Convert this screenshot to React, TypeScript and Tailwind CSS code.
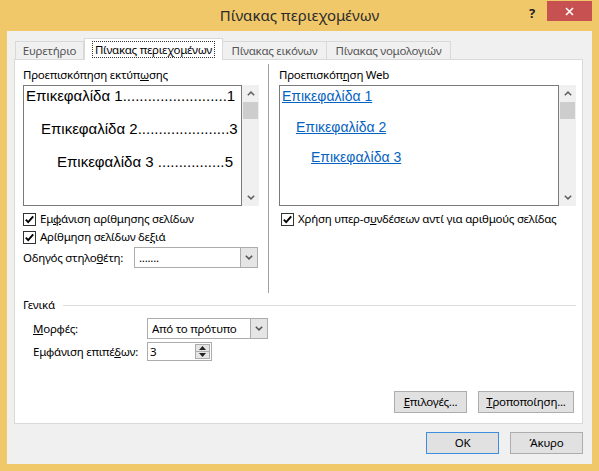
import React from 'react';

const ui = "font-['Noto_Sans',sans-serif]";
const arial = "font-['Liberation_Sans',Arial,sans-serif]";
const txt = 'text-[11.5px] tracking-[-0.25px]';

function Check() {
  return (
    <svg width="13" height="13" viewBox="0 0 13 13" className="shrink-0">
      <rect x="0.5" y="0.5" width="12" height="12" fill="#fff" stroke="#333" />
      <path d="M2.8 6.6 L5.2 9.1 L10.2 3.4" fill="none" stroke="#000" strokeWidth="1.9" />
    </svg>
  );
}

function Chevron({ up = false, color = '#606060' }: { up?: boolean; color?: string }) {
  return (
    <svg width="8" height="5" viewBox="0 0 8 5">
      <path
        d={up ? 'M0.8 4.3 L4 1.1 L7.2 4.3' : 'M0.8 0.7 L4 3.9 L7.2 0.7'}
        fill="none"
        stroke={color}
        strokeWidth="1.5"
      />
    </svg>
  );
}

function Scrollbar() {
  return (
    <div className="w-[17px] h-[121px] bg-[#f0f0f0] flex flex-col">
      <div className="h-[17px] flex items-center justify-center">
        <Chevron up />
      </div>
      <div className="h-[17px] mx-[1px] bg-[#cdcdcd]" />
      <div className="flex-1" />
      <div className="h-[17px] flex items-center justify-center">
        <Chevron />
      </div>
    </div>
  );
}

function Select({ value, width }: { value: string; width: string }) {
  return (
    <div className={`${width} h-full flex border border-[#acacac] bg-white`}>
      <div className={`flex-1 flex items-center pl-[4px] ${txt} text-black`}>{value}</div>
      <div className="w-[17px] bg-[#e5e5e5] border-l border-[#acacac] flex items-center justify-center">
        <Chevron color="#555" />
      </div>
    </div>
  );
}

function Leader({ title, page, dots, indent }: { title: string; page: string; dots: number; indent: string }) {
  return (
    <div className={`flex items-baseline whitespace-pre ${indent}`}>
      <span>{title}</span>
      <span>{'.'.repeat(dots)}</span>
      <span className="ml-auto">{page}</span>
    </div>
  );
}

function CheckRow({ children }: { children: React.ReactNode }) {
  return (
    <div className={`h-[18px] flex items-center gap-[4px] ${txt} text-black whitespace-nowrap`}>
      <Check />
      <span>{children}</span>
    </div>
  );
}

function Btn({ children, width, focus = false }: { children: React.ReactNode; width: string; focus?: boolean }) {
  return (
    <div
      className={`${width} h-[22px] flex items-center justify-center ${txt} text-black bg-[#e1e1e1] border ${
        focus ? 'border-[#3c8fde]' : 'border-[#adadad]'
      }`}
    >
      {children}
    </div>
  );
}

export default function App() {
  return (
    <div className={`w-[599px] h-[471px] bg-[#f0c86a] flex flex-col ${ui}`}>
      {/* title bar */}
      <div className="h-[31px] relative flex items-center justify-center">
        <span className="text-[15px] text-[#2b2b2b] pb-[1px]">Πίνακας περιεχομένων</span>
        <span className="absolute left-[529px] top-[4px] text-[13px] font-bold text-[#222]">?</span>
        <div className="absolute left-[547px] top-[1px] w-[45px] h-[20px] bg-[#c75050] flex items-center justify-center">
          <svg width="9" height="9" viewBox="0 0 9 9">
            <path d="M1 1 L8 8 M8 1 L1 8" stroke="#fff" strokeWidth="1.6" />
          </svg>
        </div>
      </div>

      {/* client */}
      <div className="mx-[7px] h-[433px] bg-[#f0f0f0] pl-[7px] pr-[9px] pt-[7px]">
        {/* tabs */}
        <div className={`h-[21px] flex items-end pl-[1px] relative z-10 ${txt}`}>
          <div className="w-[69px] h-[18px] border border-b-0 border-[#d9d9d9] flex items-center justify-center text-[#555]">
            Ευρετήριο
          </div>
          <div className="w-[139px] h-[22px] -mb-[1px] bg-white border border-b-0 border-[#d9d9d9] flex items-center justify-center">
            <span className="text-black border border-dotted border-[#333] px-[2px] leading-[15px]">
              Πίνακας περιε<u>χ</u>ομένων
            </span>
          </div>
          <div className="w-[104px] h-[18px] border border-b-0 border-l-0 border-[#d9d9d9] flex items-center justify-center text-[#555]">
            Πίνακας εικόνων
          </div>
          <div className="w-[124px] h-[18px] border border-b-0 border-l-0 border-[#d9d9d9] flex items-center justify-center text-[#555]">
            Πίνακας νομολογιών
          </div>
        </div>

        {/* panel */}
        <div className="h-[365px] bg-white border border-[#d9d9d9] pl-[8px] pr-[6px] flex flex-col">
          <div className="h-[233px] flex pt-[4px]">
            {/* left column */}
            <div className="w-[236px] flex flex-col pt-[4px]">
              <div className={`h-[14px] leading-[14px] ${txt} text-black`}>
                Προεπισκόπηση εκτύπ<u>ω</u>σης
              </div>
              <div className="mt-[3px] flex">
                <div className={`w-[219px] h-[121px] border border-[#7a7a7a] pl-[2px] pr-[8px] flex flex-col gap-[14px] text-[15px] leading-[19px] text-black ${arial}`}>
                  <Leader title="Επικεφαλίδα 1" page="1" dots={25} indent="" />
                  <Leader title="Επικεφαλίδα 2" page="3" dots={22} indent="pl-[15px]" />
                  <Leader title="Επικεφαλίδα 3 " page="5" dots={16} indent="pl-[31px]" />
                </div>
                <Scrollbar />
              </div>
              <div className="mt-[4px]">
                <CheckRow>
                  Εμ<u>φ</u>άνιση αρίθμησης σελίδων
                </CheckRow>
                <CheckRow>
                  Αρίθμηση σελίδων δε<u>ξ</u>ιά
                </CheckRow>
              </div>
              <div className="mt-[1px] h-[21px] flex items-center">
                <span className={`w-[111px] ${txt} text-black whitespace-nowrap`}>
                  Οδηγός στηλο<u>θ</u>έτη:
                </span>
                <Select value="......." width="w-[124px]" />
              </div>
            </div>

            <div className="ml-[9px] w-px bg-[#a0a0a0]" />

            {/* right column */}
            <div className="ml-[10px] w-[297px] flex flex-col pt-[4px]">
              <div className={`h-[14px] leading-[14px] ${txt} text-black`}>
                Προεπισκόπ<u>η</u>ση Web
              </div>
              <div className="mt-[3px] flex">
                <div className={`w-[280px] h-[121px] border border-[#7a7a7a] pl-[2px] flex flex-col items-start gap-[10.5px] text-[14px] leading-[20px] text-[#0563c1] ${arial}`}>
                  <span className="underline">Επικεφαλίδα 1</span>
                  <span className="underline ml-[14px]">Επικεφαλίδα 2</span>
                  <span className="underline ml-[29px]">Επικεφαλίδα 3</span>
                </div>
                <Scrollbar />
              </div>
              <div className="mt-[4px] pl-[2px]">
                <CheckRow>
                  Χρήση υπερ-σ<u>υ</u>νδέσεων αντί για αριθμούς σελίδας
                </CheckRow>
              </div>
            </div>
          </div>

          {/* general */}
          <div className="mt-[5px] h-[14px] flex items-center">
            <span className={`${txt} text-black leading-[14px]`}>Γενικά</span>
            <div className="ml-[8px] flex-1 h-px bg-[#dcdcdc]" />
          </div>
          <div className="mt-[6px] h-[21px] flex items-center pl-[10px]">
            <span className={`w-[114px] ${txt} text-black`}>
              <u>Μ</u>ορφές:
            </span>
            <Select value="Από το πρότυπο" width="w-[121px]" />
          </div>
          <div className="mt-[3px] h-[19px] flex items-center pl-[10px]">
            <span className={`w-[114px] ${txt} text-black whitespace-nowrap`}>
              Εμφάνιση επιπέ<u>δ</u>ων:
            </span>
            <div className="w-[65px] h-full flex border border-[#acacac] bg-white">
              <div className={`flex-1 flex items-center pl-[2px] ${txt} text-black`}>3</div>
              <div className="w-[15px] flex flex-col my-[1px] mr-[1px] border border-[#acacac] bg-[#e5e5e5]">
                <div className="flex-1 flex items-center justify-center border-b border-[#acacac]">
                  <svg width="7" height="4" viewBox="0 0 7 4">
                    <path d="M0 4 L3.5 0 L7 4 Z" fill="#222" />
                  </svg>
                </div>
                <div className="flex-1 flex items-center justify-center">
                  <svg width="7" height="4" viewBox="0 0 7 4">
                    <path d="M0 0 L3.5 4 L7 0 Z" fill="#222" />
                  </svg>
                </div>
              </div>
            </div>
          </div>

          <div className="mt-[30px] flex justify-end gap-[11px] pr-[2px]">
            <Btn width="w-[73px]">
              <u>Ε</u>πιλογές...
            </Btn>
            <Btn width="w-[96px]">
              <u>Τ</u>ροποποίηση...
            </Btn>
          </div>
        </div>

        {/* dialog buttons */}
        <div className="mt-[8px] flex justify-end gap-[11px]">
          <Btn width="w-[73px]" focus>
            OK
          </Btn>
          <Btn width="w-[73px]">Άκυρο</Btn>
        </div>
      </div>
    </div>
  );
}
